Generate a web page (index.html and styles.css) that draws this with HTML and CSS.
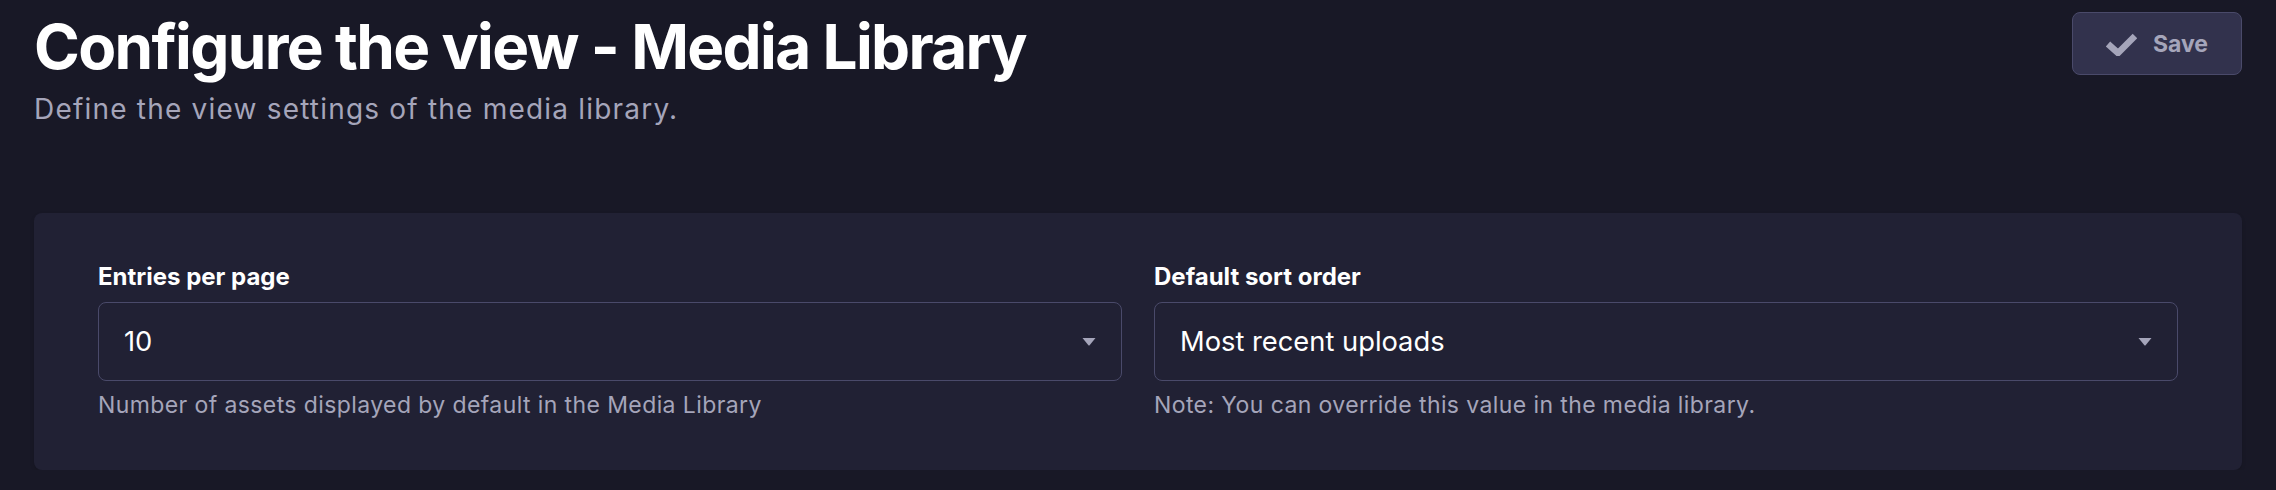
FILE: index.html
```html
<!DOCTYPE html>
<html lang="en">
<head>
<meta charset="utf-8">
<title>Configure the view - Media Library</title>
<link rel="stylesheet" href="styles.css">
</head>
<body>
<main class="page">
  <header class="header">
    <div class="header-text">
      <h1 class="title">Configure the view - Media Library</h1>
      <p class="subtitle">Define the view settings of the media library.</p>
    </div>
    <button class="save-btn" type="button" disabled>
      <svg class="save-icon" width="32" height="24" viewBox="0 0 32 24" aria-hidden="true">
        <polyline points="3,12 13,21 30,4" fill="none" stroke="currentColor" stroke-width="6.5" stroke-linejoin="miter" stroke-linecap="butt"/>
      </svg>
      <span>Save</span>
    </button>
  </header>

  <section class="card">
    <div class="fields">
      <div class="field">
        <label class="label">Entries per page</label>
        <div class="select">
          <span class="select-value">10</span>
          <svg class="caret" width="14" height="8" viewBox="0 0 14 8" aria-hidden="true"><path d="M0.5 0h13L7.6 7.2a0.8 0.8 0 0 1-1.2 0Z" fill="currentColor"/></svg>
        </div>
        <p class="hint">Number of assets displayed by default in the Media Library</p>
      </div>
      <div class="field">
        <label class="label">Default sort order</label>
        <div class="select">
          <span class="select-value">Most recent uploads</span>
          <svg class="caret" width="14" height="8" viewBox="0 0 14 8" aria-hidden="true"><path d="M0.5 0h13L7.6 7.2a0.8 0.8 0 0 1-1.2 0Z" fill="currentColor"/></svg>
        </div>
        <p class="hint">Note: You can override this value in the media library.</p>
      </div>
    </div>
  </section>
</main>
</body>
</html>
```

FILE: styles.css
```css
* { box-sizing: border-box; }

html, body {
  margin: 0;
  padding: 0;
  background: #181826;
  font-family: Inter, "Noto Sans", "Liberation Sans", sans-serif;
  color: #ffffff;
}

.page {
  padding: 12px 34px 0 34px;
}

.header {
  display: flex;
  justify-content: space-between;
  align-items: flex-start;
}

.title {
  margin: 0;
  font-size: 62px;
  line-height: 70px;
  font-weight: 700;
  color: #ffffff;
  letter-spacing: -1.65px;
}

.subtitle {
  margin: 7px 0 0 0;
  font-size: 28px;
  line-height: 40px;
  color: #a5a5ba;
  font-weight: 400;
  letter-spacing: 1.2px;
}

.save-btn {
  display: flex;
  align-items: center;
  gap: 16px;
  height: 63px;
  padding: 0 33px 0 32px;
  background: #32324d;
  border: 1.5px solid #4a4a6a;
  border-radius: 8px;
  color: #a5a5ba;
  font-family: inherit;
  font-size: 23px;
  font-weight: 700;
  cursor: not-allowed;
}

.save-icon { display: block; }

.card {
  margin-top: 84px;
  background: #212134;
  border-radius: 8px;
  padding: 48px 64px 50px 64px;
  box-shadow: 0 2px 4px rgba(0, 0, 0, 0.12);
}

.fields {
  display: grid;
  grid-template-columns: 1fr 1fr;
  gap: 32px;
}

.field {
  display: flex;
  flex-direction: column;
}

.label {
  font-size: 24px;
  font-weight: 700;
  line-height: 32px;
  color: #ffffff;
  margin-bottom: 9px;
}

.select {
  display: flex;
  align-items: center;
  justify-content: space-between;
  height: 79px;
  padding: 0 25px 0 25px;
  background: #212134;
  border: 1.5px solid #4a4a6a;
  border-radius: 8px;
}

.select-value {
  font-size: 27.3px;
  color: #ffffff;
}

.caret {
  display: block;
  color: #a5a5ba;
}

.hint {
  margin: 9px 0 0 0;
  font-size: 23px;
  line-height: 30px;
  color: #a5a5ba;
  letter-spacing: 0.4px;
}
```
